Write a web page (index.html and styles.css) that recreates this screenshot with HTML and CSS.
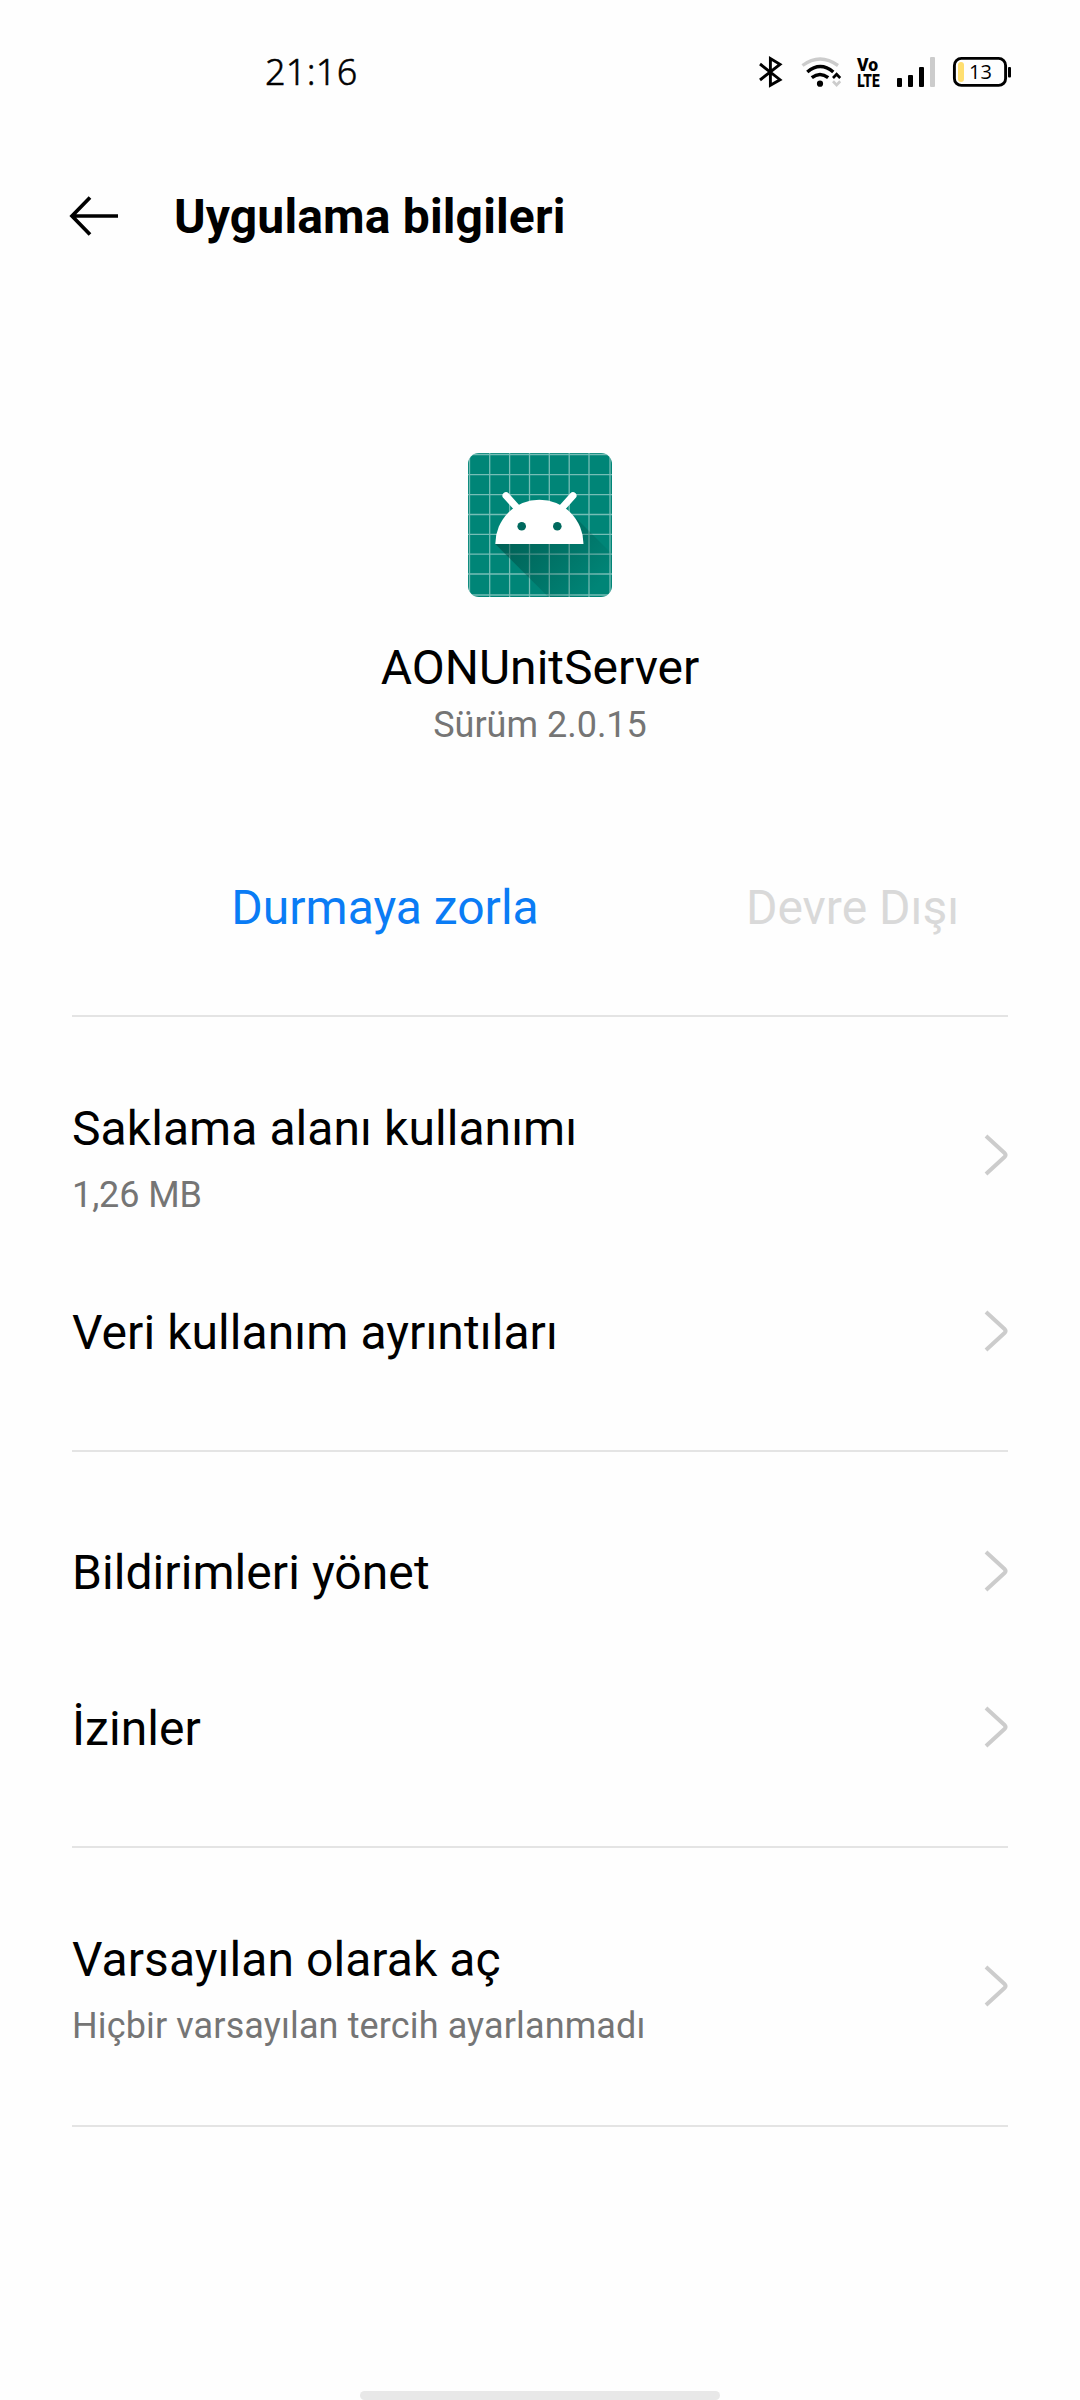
FILE: index.html
```html
<!DOCTYPE html>
<html lang="tr">
<head>
<meta charset="utf-8">
<title>Uygulama bilgileri</title>
<link rel="stylesheet" href="styles.css">
</head>
<body>
<div class="screen">
  <div class="status-bar">
    <time class="clock">21:16</time>
    <svg class="status-icons" width="290" height="65" viewBox="0 0 290 65" fill="none">
      <!-- bluetooth -->
      <path d="M20 24 40 39.700 30.400 45.300V18.500L40 24.300 20 40" stroke="#000" stroke-width="2.900"/>
      <!-- wi-fi -->
      <path d="M62.500 25.500Q80 12.500 98 25.500" stroke="#ccc" stroke-width="3.400"/>
      <path d="M67.300 32Q80.300 21 93.300 32" stroke="#000" stroke-width="3.500"/>
      <path d="M71.800 37.700Q80 31.300 88.200 37.700" stroke="#000" stroke-width="3.500"/>
      <circle cx="80" cy="43.700" r="3.100" fill="#000"/>
      <path d="M93 38 96.600 34.300 100.200 38" stroke="#000" stroke-width="2.700"/>
      <path d="M93 41.300 96.600 45 100.200 41.300" stroke="#ccc" stroke-width="2.700"/>
      <!-- VoLTE -->
      <text class="volte" x="117" y="31.400" textLength="21" lengthAdjust="spacingAndGlyphs">Vo</text>
      <text class="volte" x="117.300" y="46.900" textLength="22.300" lengthAdjust="spacingAndGlyphs">LTE</text>
      <!-- signal -->
      <rect x="157" y="38" width="5" height="9" rx="1" fill="#000"/>
      <rect x="168" y="35" width="5" height="12" rx="1" fill="#000"/>
      <rect x="179" y="27" width="5" height="20" rx="1" fill="#000"/>
      <rect x="190" y="17" width="5" height="30" rx="1" fill="#ccc"/>
      <!-- battery -->
      <rect x="214.400" y="18.400" width="51.200" height="27" rx="7" stroke="#000" stroke-width="2.900"/>
      <rect x="218" y="22" width="6" height="20" rx="3" fill="#ffdf70"/>
      <rect x="268" y="27" width="3" height="10.500" rx="1" fill="#000"/>
      <text class="battery-level" x="229" y="38.700">13</text>
    </svg>
  </div>

  <header class="toolbar">
    <svg class="back" width="50" height="40" viewBox="0 0 50 40" fill="none" stroke="#000" stroke-width="3.700">
      <path d="M49 20H3M21 1.500 3 20 21 38.500"/>
    </svg>
    <h1 class="title">Uygulama bilgileri</h1>
  </header>

  <section class="app">
    <svg class="app-icon" width="144" height="144" viewBox="0 0 144 144">
      <defs>
        <clipPath id="tile"><rect width="144" height="144" rx="11"/></clipPath>
        <linearGradient id="shade" gradientUnits="userSpaceOnUse" x1="40" y1="70" x2="120" y2="144">
          <stop offset="0" stop-color="#003e36" stop-opacity=".55"/>
          <stop offset="1" stop-color="#003e36" stop-opacity="0"/>
        </linearGradient>
      </defs>
      <g clip-path="url(#tile)">
        <rect width="144" height="144" fill="#008577"/>
        <path d="M1.500 0V144M21.700 0V144M41.600 0V144M61.500 0V144M81.300 0V144M101.200 0V144M121 0V144M142 0V144M0 1.500H144M0 21.700H144M0 41.600H144M0 61.500H144M0 81.300H144M0 101.200H144M0 121H144M0 142H144" stroke="#fff" stroke-opacity=".46" stroke-width="1.300"/>
        <path d="M27.300 91 80.300 144H144V101L108 65Z" fill="url(#shade)"/>
      </g>
      <path d="M38 42.700 51 57M105 42.700 92 57" stroke="#fff" stroke-width="7" stroke-linecap="round"/>
      <path d="M27.300 91A44.100 44.300 0 0 1 115.500 91Z" fill="#fff"/>
      <circle cx="53.700" cy="73.300" r="4.300" fill="#00695e"/>
      <circle cx="89.300" cy="73.300" r="4.300" fill="#00695e"/>
    </svg>
    <div class="app-name">AONUnitServer</div>
    <div class="app-version">Sürüm 2.0.15</div>
  </section>

  <div class="actions">
    <div class="action">Durmaya zorla</div>
    <div class="action disabled">Devre Dışı</div>
  </div>

  <main class="groups">
    <section class="group">
      <div class="row tall">
        <div class="labels"><div class="label">Saklama alanı kullanımı</div><div class="summary">1,26 MB</div></div>
        <svg class="chevron" width="24" height="42" viewBox="0 0 24 42"><path d="M2 2 20.500 19Q22.500 21 20.500 23L2 40"/></svg>
      </div>
      <div class="row">
        <div class="label">Veri kullanım ayrıntıları</div>
        <svg class="chevron" width="24" height="42" viewBox="0 0 24 42"><path d="M2 2 20.500 19Q22.500 21 20.500 23L2 40"/></svg>
      </div>
    </section>
    <section class="group short">
      <div class="row">
        <div class="label">Bildirimleri yönet</div>
        <svg class="chevron" width="24" height="42" viewBox="0 0 24 42"><path d="M2 2 20.500 19Q22.500 21 20.500 23L2 40"/></svg>
      </div>
      <div class="row">
        <div class="label">İzinler</div>
        <svg class="chevron" width="24" height="42" viewBox="0 0 24 42"><path d="M2 2 20.500 19Q22.500 21 20.500 23L2 40"/></svg>
      </div>
    </section>
    <section class="group">
      <div class="row tall">
        <div class="labels"><div class="label">Varsayılan olarak aç</div><div class="summary wide">Hiçbir varsayılan tercih ayarlanmadı</div></div>
        <svg class="chevron" width="24" height="42" viewBox="0 0 24 42"><path d="M2 2 20.500 19Q22.500 21 20.500 23L2 40"/></svg>
      </div>
    </section>
  </main>
  <div class="home-bar"></div>
</div>
</body>
</html>
```
FILE: styles.css
```css
* { box-sizing: border-box; }
body {
  margin: 0;
  background: #fefefe;
  color: #000;
  font-family: Roboto, "Liberation Sans", sans-serif;
}
.screen {
  width: 1080px;
  height: 2400px;
  display: flex;
  flex-direction: column;
}
.status-bar {
  height: 144px;
  padding: 40px 50px 0 265px;
  display: flex;
  justify-content: space-between;
  align-items: flex-start;
}
.clock {
  font: 350 36px/63px "Noto Sans", sans-serif;
  letter-spacing: .3px;
  -webkit-text-stroke: .5px #000;
}
.status-icons { flex: none; }
.volte {
  font: 900 19px Roboto, sans-serif;
  fill: #000;
}
.battery-level {
  font: 400 20px "Open Sans", sans-serif;
  fill: #000;
}
.toolbar {
  height: 144px;
  padding-left: 69px;
  display: flex;
  align-items: center;
  gap: 55px;
}
.title {
  margin: 0;
  padding-top: 2px;
  font-size: 48px;
  font-weight: 700;
  line-height: 56px;
  letter-spacing: .15px;
}
.app {
  height: 537px;
  padding-top: 165px;
  display: flex;
  flex-direction: column;
  align-items: center;
}
.app-icon { flex: none; }
.app-name {
  margin-top: 43px;
  font-size: 48px;
  line-height: 56px;
}
.app-version {
  margin-top: 8px;
  font-size: 36px;
  line-height: 42px;
  color: #757575;
}
.actions {
  height: 190px;
  padding: 55px 72px 0 230px;
  display: grid;
  grid-template-columns: 310px 311px;
  column-gap: 157px;
  font-size: 48px;
  line-height: 56px;
  text-align: center;
}
.action { color: #0a7cf5; }
.disabled { color: #d9d9d9; }
.groups {
  margin: 0 72px;
  border-top: 2px solid #e4e4e4;
}
.group {
  padding: 40px 0 41px;
  border-bottom: 2px solid #e4e4e4;
}
.group.short { padding-top: 41px; }
.row {
  height: 156px;
  display: flex;
  align-items: center;
  justify-content: space-between;
}
.row.tall { height: 196px; }
.label {
  padding-top: 3px;
  font-size: 48px;
  line-height: 56px;
  letter-spacing: .07px;
}
.tall .label { padding-top: 6px; }
.summary {
  margin-top: 17px;
  font-size: 36px;
  line-height: 42px;
  letter-spacing: -.1px;
  color: #757575;
}
.summary.wide { letter-spacing: .13px; }
.chevron {
  flex: none;
  fill: none;
  stroke: #ccc;
  stroke-width: 4;
}
.home-bar {
  width: 360px;
  height: 9px;
  margin: auto auto 0;
  border-radius: 5px;
  background: #e8e8e8;
}
```
